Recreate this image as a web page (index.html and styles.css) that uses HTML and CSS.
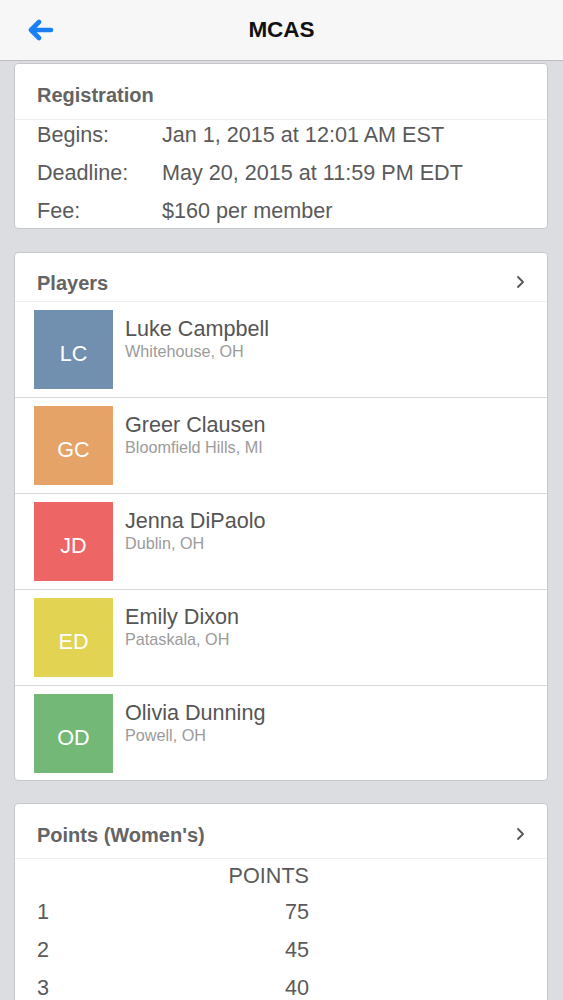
FILE: index.html
```html
<!DOCTYPE html>
<html lang="en">
<head>
<meta charset="utf-8">
<title>MCAS</title>
<link rel="stylesheet" href="styles.css">
</head>
<body>
<header class="topbar">
  <div class="topbar-left">
    <svg class="back" width="28" height="22" viewBox="0 0 28 22" aria-hidden="true">
      <path d="M25 11H5M13 3L5 11L13 19" fill="none" stroke="#1a80f5" stroke-width="4.6" stroke-linecap="round" stroke-linejoin="round"/>
    </svg>
  </div>
  <h1 class="title">MCAS</h1>
  <div class="topbar-right"></div>
</header>

<main class="content">
  <section class="card card-reg">
    <div class="card-head head-reg">
      <span class="card-title">Registration</span>
    </div>
    <div class="reg-rows">
      <div class="reg-row"><span class="reg-label">Begins:</span><span class="reg-value">Jan 1, 2015 at 12:01 AM EST</span></div>
      <div class="reg-row"><span class="reg-label">Deadline:</span><span class="reg-value">May 20, 2015 at 11:59 PM EDT</span></div>
      <div class="reg-row"><span class="reg-label">Fee:</span><span class="reg-value">$160 per member</span></div>
    </div>
  </section>

  <section class="card">
    <div class="card-head head-players">
      <span class="card-title">Players</span>
      <svg class="chev" width="9" height="14" viewBox="0 0 9 14" aria-hidden="true"><path d="M2 2L7 7L2 12" fill="none" stroke="#555" stroke-width="1.8" stroke-linecap="round" stroke-linejoin="round"/></svg>
    </div>
    <ul class="players">
      <li class="player">
        <div class="avatar av-blue">LC</div>
        <div class="player-text"><div class="player-name">Luke Campbell</div><div class="player-loc">Whitehouse, OH</div></div>
      </li>
      <li class="player">
        <div class="avatar av-orange">GC</div>
        <div class="player-text"><div class="player-name">Greer Clausen</div><div class="player-loc">Bloomfield Hills, MI</div></div>
      </li>
      <li class="player">
        <div class="avatar av-red">JD</div>
        <div class="player-text"><div class="player-name">Jenna DiPaolo</div><div class="player-loc">Dublin, OH</div></div>
      </li>
      <li class="player">
        <div class="avatar av-yellow">ED</div>
        <div class="player-text"><div class="player-name">Emily Dixon</div><div class="player-loc">Pataskala, OH</div></div>
      </li>
      <li class="player">
        <div class="avatar av-green">OD</div>
        <div class="player-text"><div class="player-name">Olivia Dunning</div><div class="player-loc">Powell, OH</div></div>
      </li>
    </ul>
  </section>

  <section class="card">
    <div class="card-head head-points">
      <span class="card-title">Points (Women's)</span>
      <svg class="chev" width="9" height="14" viewBox="0 0 9 14" aria-hidden="true"><path d="M2 2L7 7L2 12" fill="none" stroke="#555" stroke-width="1.8" stroke-linecap="round" stroke-linejoin="round"/></svg>
    </div>
    <div class="points">
      <div class="pt-head"></div><div class="pt-head pt-num">POINTS</div>
      <div class="pt-cell">1</div><div class="pt-cell pt-num">75</div>
      <div class="pt-cell">2</div><div class="pt-cell pt-num">45</div>
      <div class="pt-cell">3</div><div class="pt-cell pt-num">40</div>
    </div>
  </section>
</main>
</body>
</html>
```

FILE: styles.css
```css
* { box-sizing: border-box; }

html, body {
  margin: 0;
  padding: 0;
}

body {
  background: #dcdde0;
  font-family: "Liberation Sans", Arial, Helvetica, sans-serif;
  color: #585858;
}

.topbar {
  height: 61px;
  background: #f7f7f7;
  border-bottom: 1px solid #bdbdbf;
  display: grid;
  grid-template-columns: 1fr auto 1fr;
  align-items: center;
}

.topbar-left {
  padding-left: 26px;
  display: flex;
  align-items: center;
}

.back { display: block; }

.title {
  margin: 0;
  font-size: 22.5px;
  font-weight: bold;
  color: #111;
  line-height: 26px;
}

.content {
  padding: 2px 15px 0 14px;
  display: flex;
  flex-direction: column;
  gap: 22px;
}

.card {
  background: #fff;
  border: 1px solid #c6c7ca;
  border-radius: 4px;
  overflow: hidden;
}

.card-reg { margin-bottom: 1px; }

.card-head {
  display: flex;
  align-items: center;
  justify-content: space-between;
  padding-left: 22px;
  padding-right: 22px;
  border-bottom: 1px solid #eeeeef;
}

.card-title {
  font-size: 20px;
  font-weight: bold;
  color: #646464;
  line-height: 24px;
}

.head-reg { padding-top: 19px; padding-bottom: 12px; }
.head-players { padding-top: 18px; padding-bottom: 6px; }
.head-points { padding-top: 19px; padding-bottom: 11px; }

.chev { display: block; margin-top: -3px; margin-right: 0; }

.reg-rows {
  display: flex;
  flex-direction: column;
  gap: 8px;
  padding: 0 22px 2px 22px;
}

.reg-row {
  display: grid;
  grid-template-columns: 125px 1fr;
  font-size: 21.6px;
  line-height: 30px;
  color: #5a5a5a;
}

.players {
  list-style: none;
  margin: 0;
  padding: 0;
}

.player {
  display: flex;
  align-items: flex-start;
  gap: 12px;
  padding: 8px 19px;
  border-bottom: 1px solid #d9d9db;
}

.player:last-child {
  border-bottom: none;
  padding-bottom: 7px;
}

.avatar {
  flex: none;
  width: 79px;
  height: 79px;
  display: flex;
  align-items: center;
  justify-content: center;
  padding-top: 9px;
  color: #fff;
  font-size: 21.6px;
}

.av-blue { background: #7190b0; }
.av-orange { background: #e6a367; }
.av-red { background: #ee6565; }
.av-yellow { background: #e2d452; }
.av-green { background: #74b877; }

.player-text { padding-top: 7px; }

.player-name {
  font-size: 21.6px;
  line-height: 24px;
  color: #555;
}

.player-loc {
  font-size: 16.2px;
  line-height: 20px;
  color: #9b9b9b;
}

.points {
  display: grid;
  grid-template-columns: 150px 122px;
  padding: 0 22px;
  font-size: 21.6px;
  color: #5a5a5a;
}

.pt-head { line-height: 34px; }
.pt-cell { line-height: 38px; }
.pt-num { text-align: right; }
```
